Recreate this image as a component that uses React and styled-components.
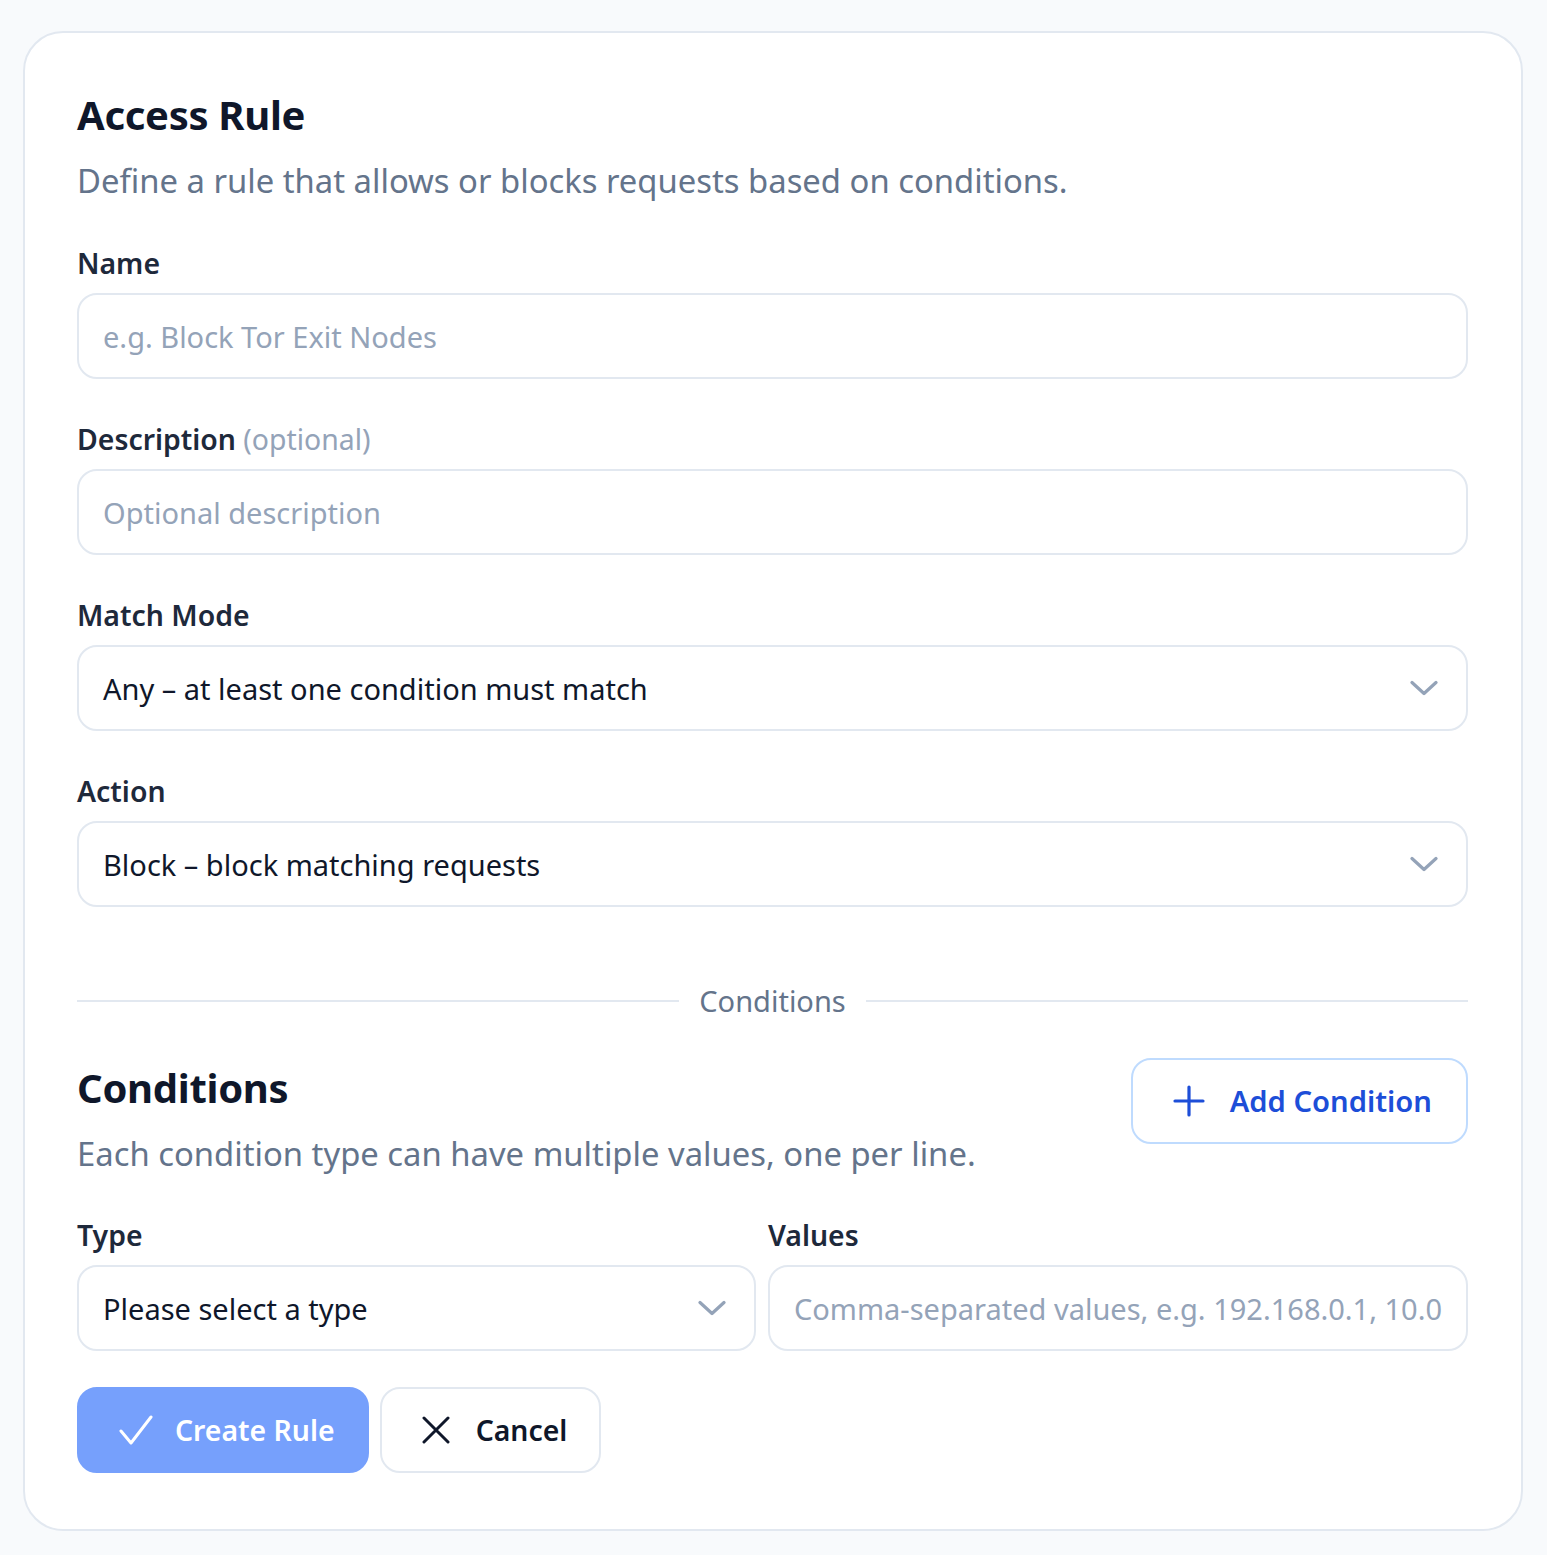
import styled, { createGlobalStyle } from 'styled-components';

const GlobalStyle = createGlobalStyle`
  html, body {
    margin: 0;
    padding: 0;
    background: #f8fafc;
  }
  body {
    font-family: 'Noto Sans', 'Open Sans', sans-serif;
    color: #0f172a;
  }
  * {
    box-sizing: border-box;
  }
`;

const Page = styled.div`
  padding: 31px 24px 24px 23px;
`;

const Card = styled.section`
  background: #ffffff;
  border: 2px solid #e2e8f0;
  border-radius: 40px;
  padding: 52px 53px 56px 52px;
  display: flex;
  flex-direction: column;
`;

const Title = styled.h1`
  margin: 0;
  font-size: 40px;
  line-height: 60px;
  font-weight: 700;
  color: #0f172a;
  letter-spacing: -0.3px;
`;

const Subtitle = styled.p`
  margin: 13px 0 0;
  font-size: 32.8px;
  line-height: 46px;
  color: #64748b;
`;

const Field = styled.div`
  display: flex;
  flex-direction: column;
  gap: 10px;
  margin-top: ${({ $top }) => $top || 40}px;
`;

const Label = styled.label`
  font-size: 28.4px;
  line-height: 40px;
  font-weight: 600;
  color: #1e293b;

  span {
    font-weight: 400;
    color: #94a3b8;
  }
`;

const Input = styled.input`
  width: 100%;
  height: 86px;
  border: 2px solid #e2e8f0;
  border-radius: 20px;
  padding: 0 24px;
  font-family: inherit;
  font-size: 29px;
  color: #0f172a;
  background: #fff;
  outline: none;

  &::placeholder {
    color: #94a3b8;
  }
`;

const SelectBox = styled.div`
  height: 86px;
  border: 2px solid #e2e8f0;
  border-radius: 20px;
  padding: 0 28px 0 24px;
  display: flex;
  align-items: center;
  justify-content: space-between;
  font-size: 29px;
  color: #0f172a;
  background: #fff;
`;

const Divider = styled.div`
  display: flex;
  align-items: center;
  gap: 20px;
  margin-top: 74px;
  font-size: 29px;
  color: #64748b;

  &::before,
  &::after {
    content: '';
    flex: 1;
    height: 2px;
    background: #e2e8f0;
  }
`;

const SectionHeader = styled.div`
  display: flex;
  justify-content: space-between;
  align-items: flex-start;
  margin-top: 38px;
`;

const OutlineButton = styled.button`
  height: 86px;
  padding: 0 ${({ $compact }) => ($compact ? 32 : 34)}px 0 40px;
  border: 2px solid ${({ $tone }) => ($tone === 'blue' ? '#bfdbfe' : '#e2e8f0')};
  border-radius: 20px;
  background: #fff;
  color: ${({ $tone }) => ($tone === 'blue' ? '#1d4ed8' : '#0f172a')};
  font-family: inherit;
  font-size: ${({ $compact }) => ($compact ? 28.4 : 29.2)}px;
  font-weight: 600;
  display: flex;
  align-items: center;
  gap: ${({ $compact }) => ($compact ? 26 : 25)}px;
  cursor: pointer;
`;

const PrimaryButton = styled(OutlineButton)`
  background: #76a0fc;
  border-color: #76a0fc;
  color: #fff;
  gap: 22px;
`;

const Row = styled.div`
  display: grid;
  grid-template-columns: 679px 1fr;
  gap: 12px;
  margin-top: 38px;
`;

const Col = styled.div`
  display: flex;
  flex-direction: column;
  gap: 10px;
`;

const Actions = styled.div`
  display: flex;
  gap: 11px;
  margin-top: 36px;
`;

const Chevron = () => (
  <svg width="28" height="16" viewBox="0 0 28 16" fill="none">
    <path d="M2 2.5l12 11 12-11" stroke="#94a3b8" strokeWidth="3.2" strokeLinecap="round" strokeLinejoin="round" />
  </svg>
);

const Plus = () => (
  <svg width="32" height="32" viewBox="0 0 32 32" fill="none">
    <path d="M16 2v28M2 16h28" stroke="currentColor" strokeWidth="3.2" strokeLinecap="round" />
  </svg>
);

const Check = () => (
  <svg width="34" height="30" viewBox="0 0 34 30" fill="none">
    <path d="M2 16l10 12L32 2" stroke="currentColor" strokeWidth="3" strokeLinecap="round" strokeLinejoin="round" />
  </svg>
);

const Cross = () => (
  <svg width="28" height="28" viewBox="0 0 28 28" fill="none">
    <path d="M2 2l24 24M26 2L2 26" stroke="currentColor" strokeWidth="3" strokeLinecap="round" />
  </svg>
);

export default function App() {
  return (
    <>
      <GlobalStyle />
      <Page>
        <Card>
          <Title>Access Rule</Title>
          <Subtitle>Define a rule that allows or blocks requests based on conditions.</Subtitle>

          <Field $top={39}>
            <Label>Name</Label>
            <Input placeholder="e.g. Block Tor Exit Nodes" />
          </Field>

          <Field>
            <Label>
              Description <span>(optional)</span>
            </Label>
            <Input placeholder="Optional description" />
          </Field>

          <Field>
            <Label>Match Mode</Label>
            <SelectBox>
              Any – at least one condition must match
              <Chevron />
            </SelectBox>
          </Field>

          <Field>
            <Label>Action</Label>
            <SelectBox>
              Block – block matching requests
              <Chevron />
            </SelectBox>
          </Field>

          <Divider>Conditions</Divider>

          <SectionHeader>
            <div>
              <Title>Conditions</Title>
              <Subtitle>Each condition type can have multiple values, one per line.</Subtitle>
            </div>
            <OutlineButton $tone="blue">
              <Plus />
              Add Condition
            </OutlineButton>
          </SectionHeader>

          <Row>
            <Col>
              <Label>Type</Label>
              <SelectBox>
                Please select a type
                <Chevron />
              </SelectBox>
            </Col>
            <Col>
              <Label>Values</Label>
              <Input placeholder="Comma-separated values, e.g. 192.168.0.1, 10.0.0.0/8" />
            </Col>
          </Row>

          <Actions>
            <PrimaryButton $compact>
              <Check />
              Create Rule
            </PrimaryButton>
            <OutlineButton $compact>
              <Cross />
              Cancel
            </OutlineButton>
          </Actions>
        </Card>
      </Page>
    </>
  );
}
